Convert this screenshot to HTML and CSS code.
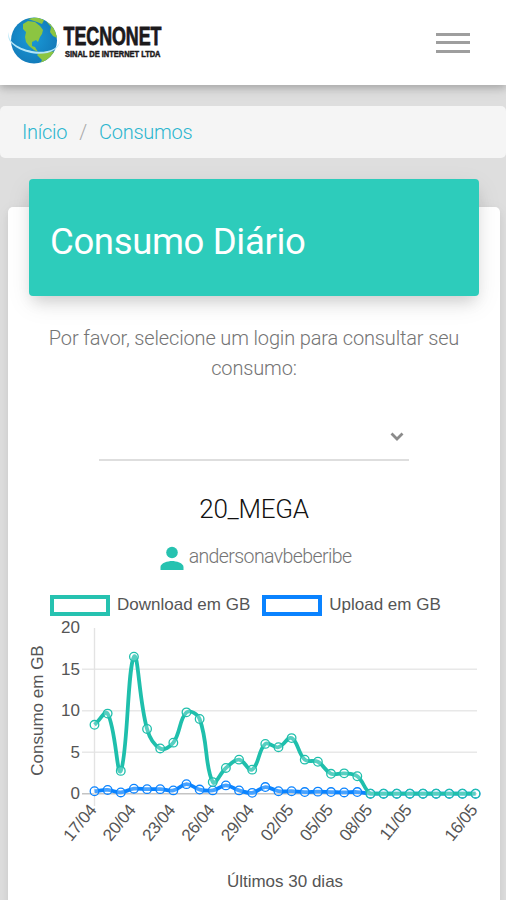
FILE: index.html
```html
<!DOCTYPE html>
<html lang="pt-br">
<head>
  <meta charset="UTF-8" />
  <meta name="viewport" content="width=device-width, initial-scale=1" />
  <title>Consumo Diário</title>
  <link rel="stylesheet" href="styles.css">
</head>
<body>

  <!-- Navbar -->
  <header class="navbar">
    <svg class="logo" width="160" height="56" viewBox="0 0 160 56" role="img" aria-label="Tecnonet">
      <defs>
        <radialGradient id="ocean" cx="45%" cy="45%" r="60%">
          <stop offset="0" stop-color="#1a9ad8" />
          <stop offset="1" stop-color="#1279b8" />
        </radialGradient>
        <clipPath id="globe"><circle cx="28" cy="26.500" r="23" /></clipPath>
      </defs>
      <circle cx="28" cy="26.500" r="23" fill="url(#ocean)" />
      <g clip-path="url(#globe)" fill="#8cc541">
        <path d="M17 10 L22 7 L29 8 L34 12 L37 16 L36 20 L34 23 L32 28 L30 26 L26 28 L26 32 L29 33 L32 38 L28 36 L23 32 L20 28 L19 23 L20 18 L17 15 Z" />
        <path d="M22 5 L31 3 L38 6 L36 10 L31 8 Z" />
        <path d="M40 7 L48 12 L51 19 L51 24 L47 22 L44 18 L45 13 Z" />
        <path d="M33 39 L42 37 L51 38 L47 44 L40 48 L34 50 L36 46 L31 41 Z" />
      </g>
      <path d="M3 18 C1 28 13 35 29 37.500 C42 39 52 35 54 27 C53 36 43 41 28 39.500 C12 37 -1 28 3 18 Z" fill="#b4e6f8" />
      <text class="logo-name" x="57.500" y="30.500" textLength="98" lengthAdjust="spacingAndGlyphs">TECNONET</text>
      <text class="logo-sub" x="59" y="42.700" textLength="95.500" lengthAdjust="spacingAndGlyphs">SINAL DE INTERNET LTDA</text>
    </svg>
    <button class="menu" aria-label="Menu">
      <span></span>
      <span></span>
      <span></span>
    </button>
  </header>

  <main>
    <nav class="breadcrumb">
      <a>Início</a>
      <span class="divider">/</span>
      <a>Consumos</a>
    </nav>

    <section class="card">
      <h1 class="card-title">Consumo Diário</h1>
      <p class="hint">Por favor, selecione um login para consultar seu consumo:</p>

      <div class="select">
        <svg width="16" height="12" viewBox="0 0 16 12"><path d="M2.500 3.500 L8 9 L13.500 3.500" fill="none" stroke="#8b8b8b" stroke-width="2.800" /></svg>
      </div>

      <h2 class="plan">20_MEGA</h2>
      <div class="user">
        <svg width="24" height="24" viewBox="0 0 24 24" fill="#26c2b0">
          <circle cx="12" cy="6.500" r="5.800" />
          <path d="M0.500 24 V21 C0.500 17 8 15 12 15 S23.500 17 23.500 21 V24 Z" />
        </svg>
        <span class="login">andersonavbeberibe</span>
      </div>

      <div class="legend">
        <span class="swatch download"></span><span>Download em GB</span>
        <span class="swatch upload"></span><span>Upload em GB</span>
      </div>
      <svg id="chart" class="chart" width="492" height="284" viewBox="8 616 492 284"></svg>
    </section>
  </main>

  <script src="chart.js"></script>
</body>
</html>
```

FILE: styles.css
```css
* {
  margin: 0;
  padding: 0;
  box-sizing: border-box;
}

body {
  height: 900px;
  overflow: hidden;
  background: #dedede;
  font-family: Roboto, "Liberation Sans", sans-serif;
  font-weight: 300;
}

.navbar {
  position: relative;
  z-index: 2;
  display: flex;
  align-items: center;
  justify-content: space-between;
  height: 85px;
  padding: 0 36px 0 6px;
  background: #fff;
  box-shadow: 0 3px 7px rgba(0, 0, 0, 0.18), 0 3px 14px rgba(0, 0, 0, 0.1);
}

.logo {
  margin-top: -1px;
  overflow: visible;
}

.logo-name {
  font: bold 26px "Liberation Sans", Arial, sans-serif;
  fill: #1c1a1c;
  stroke: #1c1a1c;
  stroke-width: 0.8px;
}

.logo-sub {
  font: bold 9px "Liberation Sans", Arial, sans-serif;
  fill: #1c1a1c;
  stroke: #1c1a1c;
  stroke-width: 0.5px;
}

.menu {
  display: flex;
  flex-direction: column;
  gap: 5.500px;
  width: 34px;
  border: 0;
  background: none;
}

.menu span {
  height: 3px;
  background: #9e9e9e;
}

.breadcrumb {
  display: flex;
  align-items: center;
  gap: 12px;
  height: 52px;
  margin-top: 21px;
  padding-left: 22px;
  border-radius: 5px;
  background: #f5f5f5;
  color: #2bb5cf;
  font-size: 20px;
  letter-spacing: -0.25px;
}

.divider {
  color: #a9a9a9;
}

.card {
  height: 720px;
  margin: 49px 6px 0 8px;
  border-radius: 5px;
  background: #fff;
  box-shadow: 0 3px 7px rgba(0, 0, 0, 0.05), 0 3px 16px rgba(0, 0, 0, 0.05);
  text-align: center;
}

.card-title {
  position: relative;
  top: -28px;
  height: 117px;
  margin: 0 21px -28px;
  padding-left: 21px;
  border-radius: 4px;
  background: #2dccbb;
  box-shadow: 0 9px 14px -4px rgba(0, 0, 0, 0.14), 0 8px 26px rgba(0, 0, 0, 0.08);
  color: #fff;
  font-size: 36.500px;
  font-weight: 400;
  letter-spacing: -0.35px;
  line-height: 125px;
  text-align: left;
}

.hint {
  padding: 27px 30px 0;
  color: #747474;
  font-size: 20px;
  letter-spacing: -0.150px;
  line-height: 30px;
}

.select {
  display: flex;
  align-items: center;
  justify-content: flex-end;
  width: 310px;
  height: 48px;
  margin: 30px auto 0 91px;
  padding-right: 4px;
  border-bottom: 2px solid #dedede;
}

.plan {
  margin-top: 31px;
  color: #111;
  font-size: 26px;
  font-weight: 300;
  letter-spacing: -0.3px;
  line-height: 34px;
}

.user {
  display: flex;
  align-items: center;
  justify-content: center;
  gap: 5px;
  height: 28px;
  margin-top: 18px;
  padding-left: 3px;
  color: #747474;
  font-size: 19.500px;
  letter-spacing: -0.6px;
}

.login {
  padding-bottom: 3px;
}

.legend {
  display: flex;
  align-items: center;
  height: 22px;
  margin-top: 22px;
  padding-left: 42px;
  color: #555;
  font: 17px "Liberation Sans", Arial, sans-serif;
  white-space: nowrap;
}

.swatch {
  width: 60px;
  height: 21px;
  margin-right: 7px;
  border: 4px solid #26c2b0;
}

.swatch.upload {
  margin-left: 12px;
  border-color: #0a83ff;
}

.chart {
  display: block;
}

.chart text {
  fill: #555;
  font: 17px "Liberation Sans", Arial, sans-serif;
}

.chart .date {
  letter-spacing: -0.3px;
}
```

FILE: chart.js
```javascript
const download = [8.3, 9.65, 2.75, 16.5, 7.8, 5.45, 6.15, 9.8, 9, 1.4, 3.1, 4.1, 2.9, 6, 5.6, 6.7, 4.1, 3.85, 2.4, 2.45, 2.1, 0, 0, 0, 0, 0, 0, 0, 0, 0];
const upload = [0.3, 0.45, 0.15, 0.6, 0.55, 0.55, 0.4, 1.15, 0.5, 0.4, 1, 0.4, 0.1, 0.8, 0.3, 0.3, 0.2, 0.25, 0.2, 0.15, 0.2, 0, 0, 0, 0, 0, 0, 0, 0, 0];
const labels = { 0: "17/04", 3: "20/04", 6: "23/04", 9: "26/04", 12: "29/04", 15: "02/05", 18: "05/05", 21: "08/05", 24: "11/05", 29: "16/05" };

const px = i => 94.5 + i * 13.14;
const py = v => 793.7 - v * 8.3;

// Smooth curve, control points from the neighbours (tension 0.4)
function curve(data) {
  const p = data.map((v, i) => [px(i), py(v)]);
  const ctrl = p.map((c, i) => {
    const a = p[i - 1] || c;
    const b = p[i + 1] || c;
    const d1 = Math.hypot(c[0] - a[0], c[1] - a[1]);
    const d2 = Math.hypot(b[0] - c[0], b[1] - c[1]);
    const k1 = 0.4 * d1 / (d1 + d2);
    const k2 = 0.4 * d2 / (d1 + d2);
    const cap = y => Math.max(627, Math.min(793.7, y));
    return [
      c[0] - k1 * (b[0] - a[0]), cap(c[1] - k1 * (b[1] - a[1])),
      c[0] + k2 * (b[0] - a[0]), cap(c[1] + k2 * (b[1] - a[1]))
    ];
  });
  let d = `M${p[0]}`;
  for (let i = 1; i < p.length; i++) {
    d += ` C${ctrl[i - 1][2]},${ctrl[i - 1][3]} ${ctrl[i][0]},${ctrl[i][1]} ${p[i]}`;
  }
  return d;
}

function series(data, color) {
  let out = `<path d="${curve(data)}" fill="none" stroke="${color}" stroke-width="3.8" />`;
  data.forEach((v, i) => {
    out += `<circle cx="${px(i)}" cy="${py(v)}" r="4.3" fill="#fff" fill-opacity="0.25" stroke="${color}" stroke-width="1.3" />`;
  });
  return out;
}

let html = "";
[0, 5, 10, 15, 20].forEach(v => {
  if (v < 20) {
    html += `<path d="M82 ${py(v)} H477" stroke="${v ? "#e8e8e8" : "#c4c4c4"}" stroke-width="1.4" />`;
  }
  html += `<text x="80" y="${py(v) + 5.5}" text-anchor="end">${v}</text>`;
});
html += `<path d="M94.5 628 V806" stroke="#e3e3e3" stroke-width="1.4" />`;

for (const i in labels) {
  html += `<text class="date" transform="translate(${px(i) - 2},806.5) rotate(-51)" text-anchor="end" dy="6">${labels[i]}</text>`;
}

html += `<text transform="translate(43,710.5) rotate(-90)" text-anchor="middle">Consumo em GB</text>`;
html += `<text x="285" y="887" text-anchor="middle">Últimos 30 dias</text>`;
html += series(upload, "#0a83ff") + series(download, "#1fbfac");

document.getElementById("chart").innerHTML = html;
```
